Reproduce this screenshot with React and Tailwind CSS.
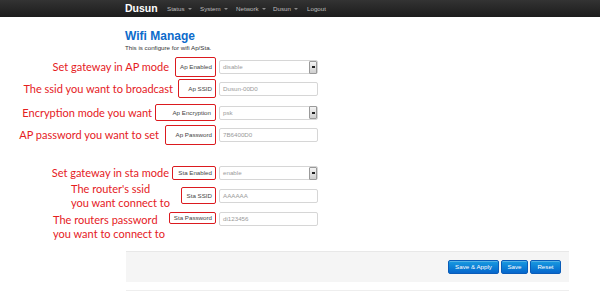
import React from "react";

const menu = [
  { label: "Status", w: "w-[33px]", caret: true },
  { label: "System", w: "w-[36px]", caret: true },
  { label: "Network", w: "w-[37px]", caret: true },
  { label: "Dusun", w: "w-[34px]", caret: true },
  { label: "Logout", w: "w-[30px]", caret: false },
];

function Caret() {
  return (
    <svg width="4" height="2" viewBox="0 0 4 2" className="ml-[3px] mt-[1px]">
      <path d="M0 0 L4 0 L2 2 Z" fill="#8a8a8a" />
    </svg>
  );
}

function SelectBox({ value }) {
  return (
    <div className="flex h-[14px] w-[99px] items-center justify-between rounded-[2px] border border-[#d6d6d6] bg-white pl-[3px]">
      <span className="text-[6.2px] text-[#9a9a9a]">{value}</span>
      <div className="flex h-[13px] w-[8px] items-center justify-center rounded-[1px] border border-[#9a9a9a] bg-gradient-to-b from-[#f4f4f4] to-[#cfcfcf]">
        <div className="h-[2px] w-[3px] bg-[#222]" />
      </div>
    </div>
  );
}

function TextBox({ value }) {
  return (
    <div className="flex h-[14px] w-[99px] items-center rounded-[2px] border border-[#d6d6d6] bg-white pl-[3px]">
      <span className="text-[6.2px] text-[#9a9a9a]">{value}</span>
    </div>
  );
}

function Row({ note, label, boxW, boxH, gap, rowH, mt, field, top, pr = "pr-[3px]" }) {
  return (
    <div className={`flex ${rowH} ${mt} ${top ? "items-start" : "items-center"}`}>
      <div className="flex w-[216px] shrink-0 items-center justify-end self-stretch">
        <div
          className={`font-['Lato',sans-serif] text-[11px] leading-[14px] text-[#e5201e] ${gap} ${
            top ? "self-start mt-[1px]" : ""
          }`}
        >
          {note}
        </div>
        <div
          className={`flex ${boxW} ${boxH} shrink-0 items-center justify-end rounded-[2px] border-[1.5px] border-[#db1a1f] ${pr} ${
            top ? "self-start" : ""
          }`}
        >
          <span className="text-[6.2px] text-[#444]">{label}</span>
        </div>
      </div>
      <div className={`ml-[3px] ${top ? "self-start" : ""}`}>{field}</div>
    </div>
  );
}

export default function App() {
  return (
    <div className="h-[294px] w-[600px] overflow-hidden bg-white font-['Liberation_Sans',Arial,sans-serif]">
      <nav className="flex h-[17px] items-center bg-gradient-to-b from-[#333333] to-[#1c1c1c] pl-[125px]">
        <div className="w-[42px] text-[10.5px] font-bold text-white">Dusun</div>
        {menu.map((m) => (
          <div key={m.label} className={`flex items-center ${m.w} text-[6.2px] text-[#bfbfbf]`}>
            {m.label}
            {m.caret && <Caret />}
          </div>
        ))}
      </nav>

      <div className="h-[40px] pl-[125px] pt-[13px]">
        <h1 className="text-[12px] font-bold leading-none text-[#0c6bcb]">Wifi Manage</h1>
        <p className="mt-[3px] text-[6.2px] leading-none text-[#333]">This is configure for wifi Ap/Sta.</p>
      </div>

      <Row
        note="Set gateway in AP mode"
        label="Ap Enabled"
        boxW="w-[41px]"
        boxH="h-[20px]"
        gap="mr-[6px]"
        rowH="h-[20px]"
        mt="mt-0"
        field={<SelectBox value="disable" />}
      />
      <Row
        note="The ssid you want to broadcast"
        label="Ap SSID"
        boxW="w-[38px]"
        boxH="h-[19px]"
        gap="mr-[5px]"
        rowH="h-[19px]"
        mt="mt-[2px]"
        field={<TextBox value="Dusun-00D0" />}
      />
      <Row
        note="Encryption mode you want"
        label="Ap Encryption"
        boxW="w-[61px]"
        boxH="h-[17px]"
        gap="mr-[3px]"
        rowH="h-[17px]"
        mt="mt-[6px]"
        pr="pr-[4px]"
        field={<SelectBox value="psk" />}
      />
      <Row
        note="AP password you want to set"
        label="Ap Password"
        boxW="w-[51px]"
        boxH="h-[20px]"
        gap="mr-[6px]"
        rowH="h-[20px]"
        mt="mt-[4px]"
        field={<TextBox value="7B6400D0" />}
      />
      <Row
        note="Set gateway in sta mode"
        label="Sta Enabled"
        boxW="w-[44px]"
        boxH="h-[14px]"
        gap="mr-[3px]"
        rowH="h-[14px]"
        mt="mt-[21px]"
        field={<SelectBox value="enable" />}
      />
      <Row
        note={
          <>
            The router's ssid
            <br />
            you want connect to
          </>
        }
        label="Sta SSID"
        boxW="w-[35px]"
        boxH="h-[17px]"
        gap="mr-[11px]"
        rowH="h-[17px]"
        mt="mt-[7px]"
        field={<TextBox value="AAAAAA" />}
      />
      <Row
        note={
          <>
            The routers password
            <br />
            you want to connect to
          </>
        }
        label="Sta Password"
        boxW="w-[47px]"
        boxH="h-[12px]"
        gap="mr-[4px]"
        rowH="h-[14px]"
        mt="mt-[8px]"
        top
        field={<TextBox value="di123456" />}
      />

      <div className="ml-[126px] mt-[25px] flex h-[31px] w-[443px] items-center justify-end gap-[2px] border-t border-[#e8e8e8] bg-[#f5f5f5] pr-[8px]">
        {[
          ["Save & Apply", "w-[51px]"],
          ["Save", "w-[27px]"],
          ["Reset", "w-[31px]"],
        ].map(([t, w]) => (
          <button
            key={t}
            className={`flex h-[14px] ${w} items-center justify-center rounded-[2px] border border-[#0a5cb8] bg-gradient-to-b from-[#1a9be0] to-[#0866cc] text-[6.2px] text-white shadow-[inset_0_1px_0_rgba(255,255,255,0.25)]`}
          >
            {t}
          </button>
        ))}
      </div>
      <div className="ml-[126px] mt-[8px] h-px w-[443px] bg-[#eeeeee]" />
    </div>
  );
}
